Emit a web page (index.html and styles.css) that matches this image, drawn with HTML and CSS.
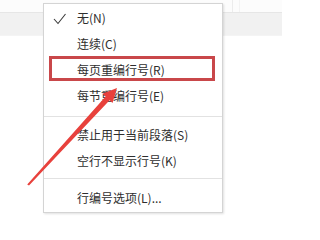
FILE: index.html
```html
<!DOCTYPE html>
<html lang="zh-CN">
<head>
<meta charset="utf-8">
<link rel="stylesheet" href="styles.css">
</head>
<body>
<div class="page">
  <div class="topbar"><span class="divider"></span><span class="divider second"></span></div>
  <div class="band"></div>
</div>

<div class="menu">
  <div class="item"><svg class="check" width="14" height="12" viewBox="0 0 14 12"><polyline points="1,6 5,10.5 12.5,1" fill="none" stroke="#3a3a3a" stroke-width="1.1"/></svg>无(N)</div>
  <div class="item">连续(C)</div>
  <div class="item">每页重编行号(R)</div>
  <div class="item">每节重编行号(E)</div>
  <div class="sep first"></div>
  <div class="item">禁止用于当前段落(S)</div>
  <div class="item">空行不显示行号(K)</div>
  <div class="sep second"></div>
  <div class="item">行编号选项(L)...</div>
</div>

<div class="highlight"></div>

<svg class="arrow" width="282" height="235" viewBox="0 0 282 235">
  <polygon points="117,88 112.5,103 109.6,100.2 29,185.6 27.2,184.4 105.6,96.6 102.4,93.8" fill="#e8413c"/>
</svg>
</body>
</html>
```

FILE: styles.css
```css
html, body {
  margin: 0;
  padding: 0;
  background: #ffffff;
  width: 282px;
  height: 235px;
  overflow: hidden;
  font-family: "Noto Sans CJK SC", "Noto Sans", sans-serif;
}

.page {
  display: flex;
  flex-direction: column;
}

.topbar {
  height: 12px;
  background: #fcfcfc;
  position: relative;
  border-bottom: 1px solid #e6e6e6;
}

.divider {
  position: absolute;
  left: 232px;
  top: 0;
  width: 1px;
  height: 12px;
  background: #ececec;
}

.divider.second {
  left: 239px;
  background: #f3f3f3;
}

.band {
  height: 22px;
  background: #f1f1f1;
  border-bottom: 1px solid #f4f4f4;
}

.menu {
  position: absolute;
  left: 43px;
  top: 3px;
  width: 178px;
  padding: 1px 0 1px;
  background: #ffffff;
  border: 1px solid #d4d4d4;
  box-shadow: 1px 1px 2px rgba(0, 0, 0, 0.12);
}

.item {
  position: relative;
  height: 26px;
  line-height: 26px;
  padding-left: 33px;
  font-size: 12px;
  color: #2e2e2e;
  white-space: nowrap;
}

.check {
  position: absolute;
  left: 9px;
  top: 8px;
}

.sep {
  height: 1px;
  background: #e2e2e2;
}

.sep.first {
  margin: 7px 0 5px;
}

.sep.second {
  margin: 4px 0 6px;
}

.highlight {
  position: absolute;
  left: 49px;
  top: 56px;
  width: 166px;
  height: 25px;
  box-sizing: border-box;
  border: 3px solid #c9474a;
}

.arrow {
  position: absolute;
  left: 0;
  top: 0;
}
```
